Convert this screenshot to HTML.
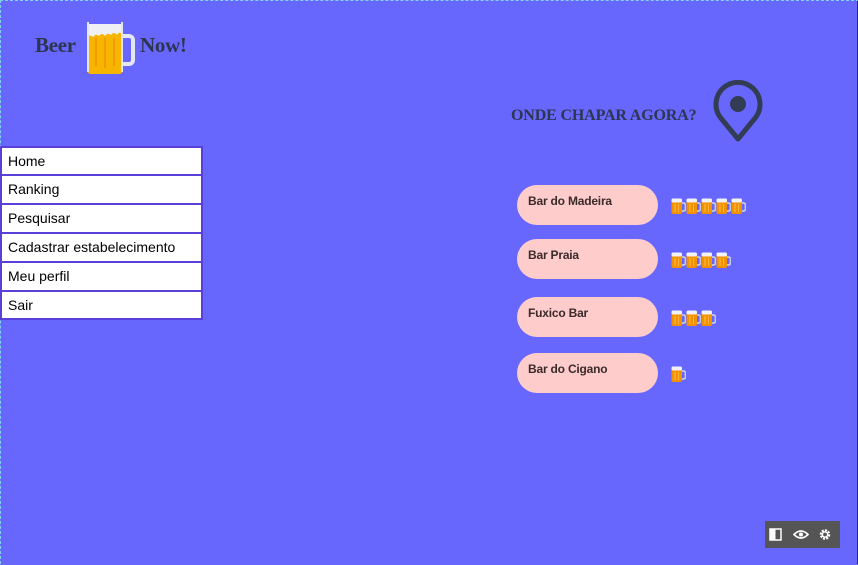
<!DOCTYPE html>
<html><head><meta charset="utf-8"><style>
html,body{margin:0;padding:0}
body{width:858px;height:565px;background:#6767fd;position:relative;overflow:hidden;font-family:"Liberation Sans",sans-serif}
.frame{position:absolute;left:0;top:0;width:856px;height:563px;border-top:1px dashed #7fd3e8;border-left:1px dashed #7fd3e8;border-right:2px solid #2a2a80}
.logo{position:absolute;top:33px;font-weight:bold;font-size:21px;color:#2e3550;font-family:"Liberation Serif",serif;letter-spacing:-0.3px}
.menu{position:absolute;left:0;top:146px;width:203px}
.menu div{box-sizing:border-box;height:29px;background:#fff;border:2px solid #5a3fd8;border-top-width:1px;border-bottom-width:1px;padding-left:6px;font-size:14px;line-height:27px;color:#000}
.menu div:first-child{border-top-width:2px}
.menu div:last-child{border-bottom-width:2px}
.title{position:absolute;left:511px;top:107px;font-family:"Liberation Serif",serif;font-weight:bold;font-size:16px;letter-spacing:-0.15px;color:#2e3550}
.pill{position:absolute;left:517px;width:141px;height:40px;border-radius:20px;background:#ffcccc;box-sizing:border-box;padding:9px 0 0 11px;font-weight:bold;font-size:12px;color:#3a2a2a;font-family:"Liberation Sans",sans-serif;letter-spacing:-0.2px}
.mugs{position:absolute;left:671px;height:16px;display:flex}
.tb{position:absolute;left:765px;top:521px;width:75px;height:27px;background:#555}
</style></head><body>
<div class="frame"></div>
<div class="logo" style="left:35px">Beer</div>
<svg style="position:absolute;left:85px;top:20px" width="52" height="56" viewBox="0 0 52 56">
<rect x="34" y="16" width="14" height="28" rx="4" fill="none" stroke="#e6e6ee" stroke-width="4"/>
<rect x="2" y="4" width="36" height="50" rx="4" fill="#f7b500"/>
<path d="M2 4h36v10q-4 -3 -6 1q-3 -4 -6 0q-3 -3 -6 1q-3 -4 -6 0q-3 -3 -6 1q-3 -3 -6 0z" fill="#eef0f4"/>
<rect x="2" y="2" width="2" height="50" fill="#e6e6ee"/><rect x="36" y="2" width="2" height="50" fill="#e6e6ee"/>
<g stroke="#f39a00" stroke-width="2"><line x1="11" y1="18" x2="11" y2="46"/><line x1="20" y1="18" x2="20" y2="48"/><line x1="29" y1="18" x2="29" y2="46"/></g>
</svg>
<div class="logo" style="left:140px">Now!</div>
<div class="menu"><div>Home</div><div>Ranking</div><div>Pesquisar</div><div>Cadastrar estabelecimento</div><div>Meu perfil</div><div>Sair</div></div>
<div class="title">ONDE CHAPAR AGORA?</div>
<svg style="position:absolute;left:711px;top:79px" width="54" height="64" viewBox="0 0 54 64">
<path d="M27 60 L9 38 A22 22 0 1 1 45 38 Z" fill="none" stroke="#333c55" stroke-width="5" stroke-linejoin="round"/>
<circle cx="27" cy="25" r="8" fill="#333c55"/>
</svg>
<svg width="0" height="0" style="position:absolute"><defs><g id="m">
<path d="M10 5h2.5a2 2 0 0 1 2 2v4a2 2 0 0 1-2 2H10" fill="none" stroke="#c8cce0" stroke-width="1.8"/>
<rect x="0.5" y="1" width="10.5" height="15" rx="2" fill="#f39200"/>
<rect x="0.5" y="0.5" width="10.5" height="4" rx="1.5" fill="#f2f2f5"/>
<line x1="4" y1="6" x2="4" y2="14" stroke="#ffb640" stroke-width="1.2"/>
<line x1="7.5" y1="6" x2="7.5" y2="14" stroke="#ffb640" stroke-width="1"/>
</g></defs></svg>
<div class="pill" style="top:185px">Bar do Madeira</div>
<div class="mugs" style="top:198px"><svg width="15" height="16"><use href="#m"/></svg><svg width="15" height="16"><use href="#m"/></svg><svg width="15" height="16"><use href="#m"/></svg><svg width="15" height="16"><use href="#m"/></svg><svg width="15" height="16"><use href="#m"/></svg></div>
<div class="pill" style="top:239px">Bar Praia</div>
<div class="mugs" style="top:252px"><svg width="15" height="16"><use href="#m"/></svg><svg width="15" height="16"><use href="#m"/></svg><svg width="15" height="16"><use href="#m"/></svg><svg width="15" height="16"><use href="#m"/></svg></div>
<div class="pill" style="top:297px">Fuxico Bar</div>
<div class="mugs" style="top:310px"><svg width="15" height="16"><use href="#m"/></svg><svg width="15" height="16"><use href="#m"/></svg><svg width="15" height="16"><use href="#m"/></svg></div>
<div class="pill" style="top:353px">Bar do Cigano</div>
<div class="mugs" style="top:366px"><svg width="15" height="16"><use href="#m"/></svg></div>
<div class="tb"><svg width="75" height="27" viewBox="0 0 75 27">
<rect x="5" y="8" width="11" height="11" fill="none" stroke="#fff" stroke-width="1.5"/><rect x="5" y="8" width="5.5" height="11" fill="#fff"/>
<path d="M29 13.5q7-7 14 0q-7 7-14 0z" fill="none" stroke="#fff" stroke-width="1.6"/><circle cx="36" cy="13.5" r="2" fill="#fff"/>
<circle cx="60" cy="13.5" r="4" fill="none" stroke="#fff" stroke-width="2.5" stroke-dasharray="2 1.1"/><circle cx="60" cy="13.5" r="2.6" fill="none" stroke="#fff" stroke-width="1.4"/>
</svg></div>
</body></html>
